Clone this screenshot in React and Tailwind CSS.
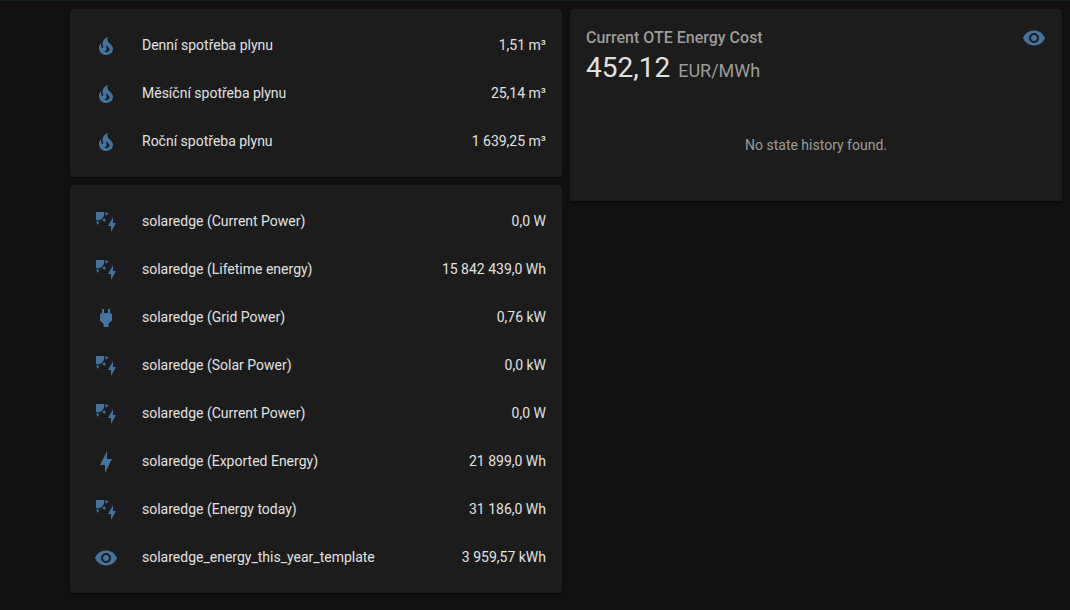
const ICONS = {
  fire: "M17.66 11.2C17.43 10.9 17.15 10.64 16.89 10.38C16.22 9.78 15.46 9.35 14.82 8.72C13.33 7.26 13 4.85 13.95 3C13 3.23 12.17 3.75 11.46 4.32C8.87 6.4 7.85 10.07 9.07 13.22C9.11 13.32 9.15 13.42 9.15 13.55C9.15 13.77 9 13.97 8.8 14.05C8.57 14.15 8.33 14.09 8.14 13.93C8.08 13.88 8.04 13.83 8 13.76C6.87 12.33 6.69 10.28 7.45 8.64C5.78 10 4.87 12.3 5 14.47C5.06 14.97 5.12 15.47 5.29 15.97C5.43 16.57 5.7 17.17 6 17.7C7.08 19.43 8.95 20.67 10.96 20.92C13.1 21.19 15.39 20.8 17.03 19.32C18.86 17.66 19.5 15 18.56 12.72L18.43 12.46C18.22 12 17.66 11.2 17.66 11.2M14.5 17.5C14.22 17.74 13.76 18 13.4 18.1C12.28 18.5 11.16 17.94 10.5 17.28C11.69 17 12.4 16.12 12.61 15.23C12.78 14.43 12.46 13.77 12.33 13C12.21 12.26 12.23 11.63 12.5 10.94C12.69 11.32 12.89 11.7 13.13 12C13.9 13 15.11 13.44 15.37 14.8C15.41 14.94 15.43 15.08 15.43 15.23C15.46 16.05 15.1 16.95 14.5 17.5Z",
  solar:
    "M11.45,2V5.55L15,3.77L11.45,2M10.45,8L8,10.46L11.75,11.71L10.45,8M2,11.45L3.77,15L5.55,11.45H2M10,2H2V10C2.57,10.17 3.17,10.25 3.77,10.25C7.35,10.26 10.26,7.35 10.27,3.75C10.26,3.16 10.17,2.57 10,2M17,22V16H14L19,7V13H22L17,22Z",
  plug: "M16,7V3H14V7H10V3H8V7H8C7,7 6,8 6,9V14.5L9.5,18V21H14.5V18L18,14.5V9C18,8 17,7 16,7Z",
  flash: "M11 15H6L13 1V9H18L11 23V15Z",
  eye: "M12,9A3,3 0 0,0 9,12A3,3 0 0,0 12,15A3,3 0 0,0 15,12A3,3 0 0,0 12,9M12,17A5,5 0 0,1 7,12A5,5 0 0,1 12,7A5,5 0 0,1 17,12A5,5 0 0,1 12,17M12,4.5C7,4.5 2.73,7.61 1,12C2.73,16.39 7,19.5 12,19.5C17,19.5 21.27,16.39 23,12C21.27,7.61 17,4.5 12,4.5Z",
};

const gas = [
  { icon: "fire", name: "Denní spotřeba plynu", value: "1,51 m³" },
  { icon: "fire", name: "Měsíční spotřeba plynu", value: "25,14 m³" },
  { icon: "fire", name: "Roční spotřeba plynu", value: "1 639,25 m³" },
];

const solar = [
  { icon: "solar", name: "solaredge (Current Power)", value: "0,0 W" },
  { icon: "solar", name: "solaredge (Lifetime energy)", value: "15 842 439,0 Wh" },
  { icon: "plug", name: "solaredge (Grid Power)", value: "0,76 kW" },
  { icon: "solar", name: "solaredge (Solar Power)", value: "0,0 kW" },
  { icon: "solar", name: "solaredge (Current Power)", value: "0,0 W" },
  { icon: "flash", name: "solaredge (Exported Energy)", value: "21 899,0 Wh" },
  { icon: "solar", name: "solaredge (Energy today)", value: "31 186,0 Wh" },
  { icon: "eye", name: "solaredge_energy_this_year_template", value: "3 959,57 kWh" },
];

function Icon({ name }) {
  return (
    <svg viewBox="0 0 24 24" className="size-6 shrink-0 fill-[#44739e]" aria-hidden="true">
      <path d={ICONS[name]} />
    </svg>
  );
}

function Card({ children }) {
  return (
    <section className="rounded bg-[#1c1c1c] p-4 shadow-[0_2px_2px_0_rgba(0,0,0,0.14),0_1px_5px_0_rgba(0,0,0,0.12),0_3px_1px_-2px_rgba(0,0,0,0.2)]">
      {children}
    </section>
  );
}

function EntitiesCard({ rows }) {
  return (
    <Card>
      <ul className="flex flex-col gap-2">
        {rows.map((row, i) => (
          <li key={i} className="flex h-10 items-center">
            <div className="flex w-10 justify-center pt-0.5">
              <Icon name={row.icon} />
            </div>
            <div className="ml-4 mr-2 min-w-0 flex-1 truncate">{row.name}</div>
            <div className="whitespace-nowrap">{row.value}</div>
          </li>
        ))}
      </ul>
    </Card>
  );
}

export default function App() {
  return (
    <div className="min-h-screen border-t border-[#101e24] bg-[#111111] pt-2 pr-2 pb-4 pl-[70px] font-[Roboto,sans-serif] text-sm text-[#e1e1e1]">
      <main className="grid grid-cols-2 items-start gap-2">
        <div className="flex flex-col gap-2">
          <EntitiesCard rows={gas} />
          <EntitiesCard rows={solar} />
        </div>

        <Card>
          <div className="flex h-[26px] items-center justify-between text-[#9b9b9b]">
            <h2 className="text-base font-medium">Current OTE Energy Cost</h2>
            <Icon name="eye" />
          </div>
          <div className="flex items-baseline gap-2">
            <span className="text-[28px] leading-[34px]">452,12</span>
            <span className="text-lg leading-none text-[#9b9b9b]">EUR/MWh</span>
          </div>
          <div className="flex h-25 items-center justify-center pt-5 text-[#9b9b9b]">
            No state history found.
          </div>
        </Card>
      </main>
    </div>
  );
}
